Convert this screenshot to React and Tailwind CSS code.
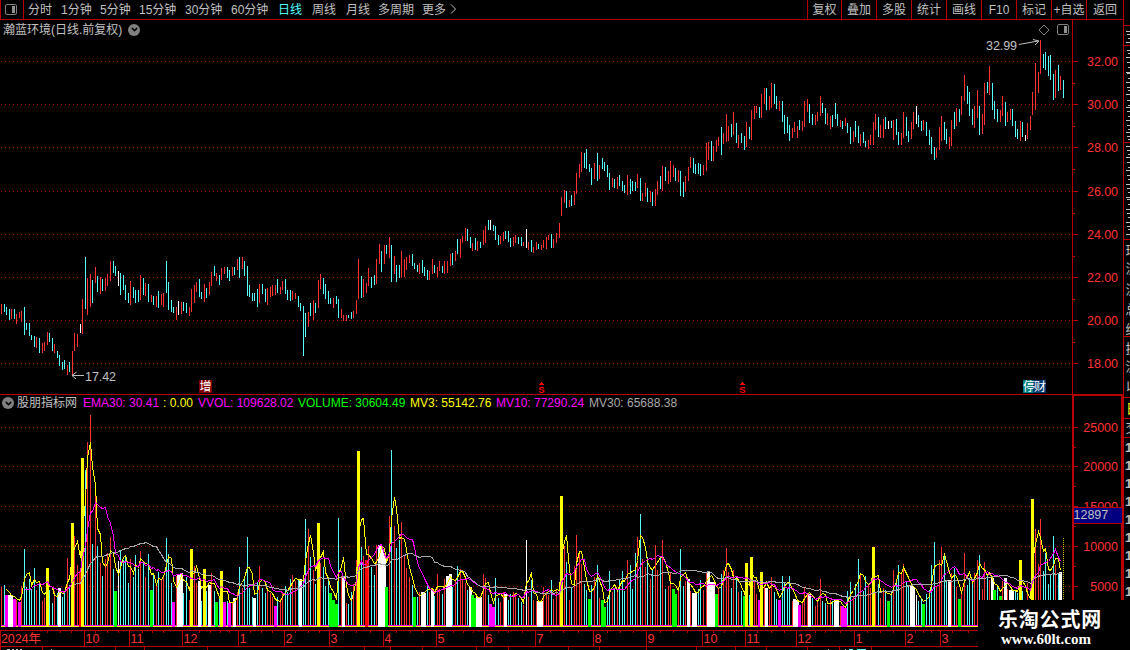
import { ChevronDown } from "lucide-react";

// x,high,low,colour (r up, c down, w flat)
const CANDLES = `
1,304,314r 4,304,312c 6,307,315c 9,309,320c 11,309,319r 14,309,319c 16,314,324r 19,312,318r 21,311,322r 24,307,335c
26,323,330c 29,323,336c 31,335,340c 34,336,347c 36,337,348r 39,338,353c 42,343,353r 44,342,351r 47,332,345r 49,333,342c
52,338,351c 54,344,353r 57,351,358c 59,355,366c 62,362,370c 64,360,369c 67,365,375r 69,362,372c 72,351,375r 74,333,351r
77,334,347r 80,324,333w 82,299,334r 85,257,309c 87,278,315r 90,274,307r 92,280,303c 95,267,283r 97,276,292c 100,277,294r
102,279,291c 105,278,291r 107,274,286r 110,261,281r 113,261,273c 115,266,276c 118,271,286w 120,273,295c 123,275,290c 125,285,300c
128,293,303c 130,281,305r 133,287,298c 135,290,303c 138,290,302c 140,275,300r 143,278,295c 145,283,296r 148,284,302c 151,295,302r
153,296,305c 156,296,307r 158,291,308c 161,294,305r 163,293,307r 166,261,293c 168,282,310c 171,300,312c 173,307,313c 176,307,320r
178,301,315w 181,302,314r 183,302,311c 186,303,313c 189,307,316r 191,289,312r 194,285,303r 196,282,292r 199,279,297c 201,292,299c
204,284,302r 206,288,298c 209,282,295r 211,272,286r 214,266,276c 216,273,281r 219,275,285c 221,268,280r 224,267,274r 227,267,278c
229,270,281c 232,267,276r 234,267,275c 237,259,270r 239,257,278c 242,257,269r 244,261,276c 247,266,296c 249,285,297c 252,293,301c
254,293,301c 257,289,307c 259,284,303r 262,284,294c 265,289,302c 267,288,305r 270,287,297r 272,285,296r 275,285,295r 277,279,293c
280,287,294r 282,281,290r 285,279,294c 287,290,300c 290,290,301c 292,291,300r 295,293,299r 298,296,307c 300,303,311c 303,306,356c
305,313,337c 308,312,327r 310,303,316c 313,300,320r 315,303,313c 318,280,308r 320,274,289r 323,278,294c 325,284,299c 328,291,304c
330,298,304c 333,298,308r 336,296,304c 338,299,318c 341,309,318r 343,315,321r 346,315,321r 348,315,318c 351,312,319c 353,311,318r
356,300,314r 358,259,299r 361,276,298c 363,279,297r 366,283,293r 368,268,286r 371,277,288c 374,275,285c 376,259,284r 379,244,264r
381,251,272c 384,245,264r 386,245,254c 389,237,258r 391,245,282c 394,256,274r 396,265,282c 399,265,278c 401,251,277r 404,259,277r
406,257,270r 409,255,263r 412,254,266c 414,263,269c 417,265,272c 419,263,274r 422,260,273c 424,267,276c 427,270,280c 429,271,280r
432,259,274r 434,265,273c 437,267,277r 439,261,271r 442,266,273c 444,261,274r 447,261,273r 450,254,266r 452,253,265c 455,251,261r
457,239,254c 460,239,258r 462,236,243r 465,228,241r 467,229,241c 470,237,248c 472,243,251r 475,238,250c 477,241,251r 480,242,248c
483,230,245r 485,226,243r 488,220,230c 490,220,230w 493,225,231c 495,226,240c 498,235,245c 500,236,244r 503,232,241r 505,231,239c
508,231,242c 510,238,247c 513,237,246r 515,235,243r 518,237,244c 521,237,246c 523,242,246r 526,229,248w 528,242,250r 531,240,252c
533,247,253r 536,242,250r 538,244,249c 541,245,250r 543,240,248r 546,237,249r 548,235,240r 551,234,248c 553,239,248r 556,233,243r
559,223,238r 561,197,216r 564,190,203r 566,191,208c 569,200,207r 571,195,206c 574,191,205r 576,173,194r 579,164,178r 581,152,172r
584,153,168c 586,149,169c 589,164,172c 591,168,185c 594,163,179r 597,153,181c 599,165,179r 602,158,169c 604,162,171c 607,165,177c
609,173,190c 612,178,187r 614,179,188c 617,177,189r 619,175,186c 622,181,191c 624,185,193c 627,175,195r 630,179,194c 632,181,191c
635,182,191c 637,174,188r 640,178,201c 642,193,201r 645,183,197r 647,188,202c 650,191,202r 652,192,206c 655,189,206r 657,181,195r
660,176,189c 662,166,191r 665,167,181c 668,171,184r 670,161,182r 673,165,177r 675,168,181c 678,170,182r 680,171,196c 683,182,197c
685,176,192r 688,167,181r 690,157,168r 693,158,173c 695,164,174c 698,163,174c 700,164,176c 703,165,175r 706,143,171r 708,142,160r
711,141,161c 713,146,161r 716,140,152r 718,137,146r 721,127,155c 723,133,144r 726,114,142r 728,126,141r 731,124,137c 733,112,135r
736,123,143c 738,135,148r 741,133,143c 744,136,150c 746,122,147r 749,127,139c 751,110,140r 754,106,119r 756,106,113r 759,107,118c
761,94,118r 764,88,104r 766,88,110c 769,96,110r 771,83,108r 774,84,104c 776,96,109c 779,101,111r 782,101,122c 784,115,134c
787,117,133c 789,125,141c 792,128,138r 794,122,132r 797,126,138r 799,120,130c 802,121,131r 804,101,127r 807,99,112r 809,104,123c
812,114,125c 815,115,125r 817,112,121r 820,96,116r 822,103,113c 825,108,124c 827,113,125r 830,116,129r 832,115,127c 835,103,119c
837,114,126c 840,120,127r 842,121,129c 845,118,126r 847,123,133c 850,127,144c 853,131,142r 855,121,137c 858,126,143c 860,134,146r
863,132,143c 865,141,147c 868,140,149r 870,135,145r 873,122,145r 875,114,130r 878,117,137c 880,125,138r 883,119,138r 885,117,129c
888,121,129w 891,121,128c 893,120,140r 896,119,135c 898,132,145c 901,133,145r 903,112,138r 906,117,136c 908,131,142c 911,122,139r
913,112,129r 916,106,124w 918,115,127c 921,121,131c 923,120,130r 926,122,136c 929,130,145c 931,137,154c 934,147,160c 936,148,158r
939,127,150r 941,116,141r 944,122,140c 946,129,144c 949,137,149r 951,120,146r 954,112,129c 956,108,126r 959,109,122c 961,96,115r
964,75,101r 967,86,104c 969,92,116c 972,109,125c 974,106,128r 977,90,118r 979,106,135c 982,114,134r 984,83,125r 987,82,93c
989,66,95r 992,83,110c 994,101,119c 997,109,122c 1000,110,122r 1002,96,116r 1005,102,126c 1007,112,122r 1010,109,120r 1012,109,126c
1015,121,137c 1017,129,139c 1020,121,141r 1022,122,137c 1025,135,141w 1027,123,139r 1030,116,130r 1032,92,115r 1035,63,110r 1038,72,93r
1040,40,74r 1043,54,68c 1045,52,70c 1048,56,76c 1050,55,80c 1053,74,100c 1055,70,98r 1058,65,91c 1060,76,90r 1063,80,98c`;

// x,top and, for the 3px signal bars, a colour letter
const VOLUMES = `
1,587 4,585 6,595M 9,595W 11,595W 14,599M 16,600 19,602M 21,586 24,549 26,587 29,579 31,589 34,568 36,590 39,584 42,601 44,598 47,568Y 49,590
52,603 54,591 57,593 59,588W 62,597 64,592 67,558 69,585 72,523Y 74,536 77,565 80,571R 82,458Y 85,470 87,442 90,415 92,544 95,494 97,546 100,563
102,576 105,559 107,553 110,537 113,569 115,591G 118,561 120,550 123,560 125,555 128,583 130,559 133,577 135,555 138,569 140,551 143,562 145,577 148,554 151,590G
153,575 156,586 158,572 161,580 163,577 166,538 168,554 171,583 173,602M 176,576 178,575W 181,573W 183,593 186,577 189,600 191,549Y 194,566 196,583 199,581W 201,601
204,569Y 206,591 209,585W 211,573 214,591 216,602G 219,599 221,571Y 224,602M 227,601 229,603M 232,602 234,598W 237,592 239,567 242,588 244,577 247,537 249,588 252,597
254,598W 257,582 259,566 262,588 265,593 267,588 270,593 272,597 275,606M 277,597 280,599 282,592 285,586 287,592 290,579 292,575 295,581 298,580 300,579W 303,581
305,519 308,529 310,557 313,570 315,584 318,523Y 320,563 323,567 325,586 328,581 330,593G 333,600G 336,604G 338,518 341,576 343,577W 346,603 348,604 351,592 353,584
356,560 358,451Y 361,547 363,556 366,560R 368,546 371,567 374,575 376,545 379,545W 381,547W 384,553W 386,587G 389,516 391,450 394,526 396,548 399,540 401,522 404,556
406,568 409,577 412,585 414,597G 417,597 419,592 422,592W 424,593W 427,583 429,592 432,589W 434,596 437,574 439,589 442,594 444,579 447,576W 450,574W 452,587 455,579
457,566 460,569 462,579 465,583 467,590 470,587W 472,595G 475,598G 477,597W 480,597W 483,574 485,578 488,595 490,604M 493,607M 495,578 498,598 500,602 503,592 505,594W
508,600 510,594 513,592 515,593 518,598 521,602 523,605 526,540 528,597 531,580 533,600 536,601 538,601W 541,601W 543,587 546,592 548,595 551,580 553,599 556,589
559,582 561,496Y 564,546 566,562 569,600 571,588 574,566 576,535 579,553 581,564 584,584 586,590 589,599G 591,585 594,577 597,565 599,598 602,600G 604,607G 607,597
609,571 612,592 614,589 617,589 619,580 622,571 624,591 627,560 630,565 632,589 635,553 637,537 640,514 642,559 645,567 647,557 650,579 652,570 655,545 657,570
660,557 662,540 665,589 668,586 670,573 673,589G 675,594G 678,587 680,549 683,586 685,581 688,579W 690,591 693,593W 695,593W 698,589 700,580 703,590 706,573 708,571W
711,582W 713,582W 716,594G 718,589 721,574 723,570 726,548 728,572 731,588 733,570 736,576 738,592 741,591 744,596G 746,563Y 749,595 751,557Y 754,580 756,594 759,600M
761,572Y 764,585 766,588W 769,590 771,577 774,592 776,599 779,600M 782,576 784,582 787,589 789,576 792,601 794,599W 797,600W 799,605M 802,601 804,587 807,594 809,594W
812,598 815,606 817,600 820,579 822,601 825,603 827,605 830,600 832,601 835,599W 837,599W 840,606 842,606M 845,608M 847,591 850,582 853,596 855,584 858,559 860,575
863,591 865,576 868,584 870,588 873,547Y 875,593 878,584 880,598 883,588 885,590 888,601G 891,592 893,570 896,582 898,565 901,573 903,564 906,582 908,586 911,585W
913,587W 916,595 918,601 921,599 923,604G 926,594 929,590 931,565 934,542 936,587 939,560 941,547 944,556 946,580 949,580W 951,573 954,568 956,587 959,599G 961,590
964,553 967,585 969,578 972,584 974,573 977,560 979,555 982,589 984,562 987,575 989,580 992,578W 994,590G 997,586 1000,596G 1002,581 1005,578W 1007,589 1010,590W 1012,590W
1015,591 1017,593 1020,560Y 1022,591 1025,605 1027,583 1030,605 1032,499Y 1035,529 1038,564 1040,519 1043,571 1045,553 1048,584 1050,574 1053,536 1055,565 1058,574 1060,572W`;

const COLORS = {
  r: "#ff3232",
  c: "#54fcfc",
  w: "#ffffff",
  M: "#ff00ff",
  W: "#ffffff",
  Y: "#ffff00",
  G: "#00ff00",
  R: "#ff0000",
};

const candles = CANDLES.trim().split(/\s+/).map((item) => {
  const [x, high, low] = item.slice(0, -1).split(",").map(Number);
  return { x, high, low, color: COLORS[item.slice(-1)] };
});

const candleColor = Object.fromEntries(candles.map((c) => [c.x, c.color]));

const volumes = VOLUMES.trim().split(/\s+/).map((item) => {
  const [, x, top, flag] = item.match(/^(\d+),(\d+)([A-Z]?)$/);
  return { x: Number(x), top: Number(top), flag, color: flag ? COLORS[flag] : candleColor[x] };
});

const average = (n) =>
  volumes
    .map((v, i) => {
      if (i < n - 1) return null;
      const sum = volumes.slice(i - n + 1, i + 1).reduce((a, b) => a + b.top, 0);
      return `${v.x + 0.5},${Math.round(sum / n) + 0.5}`;
    })
    .filter(Boolean)
    .join(" ");

const periods = [
  { label: "分时", width: "w-[33px]" },
  { label: "1分钟", width: "w-[39px]" },
  { label: "5分钟", width: "w-[39px]" },
  { label: "15分钟", width: "w-[46px]" },
  { label: "30分钟", width: "w-[46px]" },
  { label: "60分钟", width: "w-[47px]" },
  { label: "日线", width: "w-[34px]", active: true },
  { label: "周线", width: "w-[34px]" },
  { label: "月线", width: "w-[32px]" },
  { label: "多周期", width: "w-[44px]" },
  { label: "更多", width: "w-[28px]" },
];

const tools = ["复权", "叠加", "多股", "统计", "画线", "F10", "标记", "+自选", "返回"];

const indicators = [
  { label: "EMA30: 30.41", style: "w-[80px] text-[#ff00ff]" },
  { label: ": 0.00", style: "w-[35px] text-[#ffff00]" },
  { label: "VVOL: 109628.02", style: "w-[100px] text-[#ff00ff]" },
  { label: "VOLUME: 30604.49", style: "w-[112px] text-[#00ff00]" },
  { label: "MV3: 55142.76", style: "w-[86px] text-[#ffff00]" },
  { label: "MV10: 77290.24", style: "w-[93px] text-[#ff00ff]" },
  { label: "MV30: 65688.38", style: "w-[100px] text-[#a8a8a8]" },
];

const priceTicks = [[61, "32.00"], [104, "30.00"], [147, "28.00"], [191, "26.00"], [234, "24.00"], [277, "22.00"], [320, "20.00"], [363, "18.00"]];
const volumeTicks = [[427, "25000"], [466, "20000"], [506, "15000"], [546, "10000"], [586, "5000"]];

const months = [[84, "10"], [129, "11"], [182, "12"], [238, "1"], [284, "2"], [329, "3"], [383, "4"], [436, "5"], [484, "6"], [535, "7"], [593, "8"], [646, "9"], [702, "10"], [745, "11"], [796, "12"], [854, "1"], [905, "2"], [940, "3"]];
const weekTicks = [47, 60, 71, 95, 107, 118, 142, 152, 163, 199, 210, 220, 229, 250, 261, 272, 295, 308, 319, 343, 356, 370, 396, 410, 422, 453, 463, 473, 498, 508, 522, 550, 563, 578, 607, 620, 633, 660, 673, 687, 713, 724, 734, 757, 771, 784, 815, 825, 840, 867, 880, 893, 915, 923, 931, 952, 968];
const footTicks = [0, 42, 115, 144, 207, 364, 390, 422, 476, 508, 568, 599, 646, 696, 735, 766, 807, 839, 871];

const sideLines = [25, 45, 142, 239, 336, 397, 418, 437];
const sideMarks = [31, 34, 38, 42, 50, 53, 57, 62, 67, 72, 73, 78, 82, 87, 90, 94, 100, 105, 107, 111, 116, 120, 125, 129, 132, 136, 139, 146, 150, 154, 157, 162, 167, 170, 175, 179, 184, 188, 192, 197, 199, 204, 209, 213, 217, 222, 226, 229, 234];
const sideText = [[250, "环"], [268, "流"], [289, "流"], [309, "总"], [329, "终"], [348, "换"], [366, "流"], [386, "以"], [427, "交"]];
const sideRows = [447, 465, 483, 501, 519, 537, 555, 573, 591];

const GridLine = ({ y }) => (
  <line x1="1" x2="1072" y1={y + 0.5} y2={y + 0.5} stroke="#a80000" strokeDasharray="1 3" />
);

const PanelIcon = ({ className }) => (
  <svg className={className} width="12" height="11" viewBox="0 0 12 11">
    <rect x="0.5" y="0.5" width="11" height="10" rx="1.5" fill="none" stroke="#808080" />
    <rect x="7" y="2" width="3" height="7" fill="#909090" />
  </svg>
);

const RoundToggle = () => (
  <span className="flex size-3 shrink-0 items-center justify-center rounded-full bg-[#808080]">
    <ChevronDown className="size-[9px] text-black" strokeWidth={4} />
  </span>
);

const Toolbar = () => (
  <div className="flex h-5 items-center border-b border-l border-[#b80000] leading-[18px] text-[#c0c0c0]">
    <div className="flex h-full w-[23px] items-center border-r border-[#b80000] pb-px pl-1">
      <PanelIcon />
    </div>
    <div className="flex flex-1 pl-1">
      {periods.map((p) => (
        <span key={p.label} className={`${p.width} whitespace-nowrap ${p.active ? "text-[#54fcfc]" : ""}`}>
          {p.label}
        </span>
      ))}
      <svg className="mt-[3px]" width="7" height="10" viewBox="0 0 7 10">
        <path d="M1 0.5 L5.5 5 L1 9.5" fill="none" stroke="#c0c0c0" />
      </svg>
    </div>
    {tools.map((tool) => (
      <span
        key={tool}
        className="flex h-full w-[35px] items-center justify-center whitespace-nowrap border-l border-[#b80000] first-of-type:w-[34px] last:w-[37px]"
      >
        {tool}
      </span>
    ))}
  </div>
);

const PricePanel = () => (
  <div className="flex">
    <div className="w-[1072px]">
      <div className="flex h-5 items-center pb-px pl-[3px] text-[#c0c0c0]">
        <span className="w-[125px] whitespace-nowrap">瀚蓝环境(日线.前复权)</span>
        <RoundToggle />
        <svg className="ml-auto" width="12" height="12" viewBox="0 0 12 12">
          <path d="M6 1 L11 6 L6 11 L1 6 Z" fill="none" stroke="#808080" />
        </svg>
        <PanelIcon className="ml-[7px] mr-[3px]" />
      </div>
      <svg className="block overflow-visible" width="1072" height="354" viewBox="0 40 1072 354" shapeRendering="crispEdges">
        {priceTicks.map(([y]) => <GridLine key={y} y={y} />)}
        {candles.map((c) => (
          <rect key={c.x} x={c.x} y={c.high} width="1" height={c.low - c.high} fill={c.color} />
        ))}
        <g fill="none" stroke="#c0c0c0" shapeRendering="auto">
          <path d="M72 375.5 H84 M72 375.5 L76.5 372 M72 375.5 L76 379" />
          <path d="M1019 44.5 L1038 41 M1033 39.5 L1039 41 L1035 45" />
        </g>
        <g fill="#c0c0c0" fontSize="12.5">
          <text x="85" y="381" textLength="31">17.42</text>
          <text x="986" y="50" textLength="31">32.99</text>
        </g>
        <rect x="199" y="380" width="13" height="13" fill="#800000" />
        <text x="199.5" y="391" fill="#fff" fontSize="12">增</text>
        {[542, 743].map((x) => (
          <g key={x} fill="#ff0000">
            <path d={`M${x - 1} 382h1v1h1v1h1v1h-5v-1h1v-1h1z`} />
            <text x={x - 0.5} y="393" fontSize="9.5" fontWeight="bold" textAnchor="middle">S</text>
          </g>
        ))}
        <rect x="1023" y="380" width="10" height="13" fill="#008080" />
        <rect x="1033" y="380" width="13" height="13" fill="#003870" />
        <text x="1023" y="391" fill="#fff" fontSize="12" textLength="23">停财</text>
      </svg>
    </div>
    <svg className="block" width="51" height="374" viewBox="1072 20 51 374" shapeRendering="crispEdges">
      <rect x="1072" y="20" width="1" height="374" fill="#b80000" />
      {priceTicks.map(([y, label], i) => (
        <g key={y}>
          <rect x="1073" y={y} width="5" height="1" fill="#b80000" />
          {i < 7 && <rect x="1073" y={y + 22} width="2" height="1" fill="#b80000" />}
          <text x="1087" y={y + 5} fontSize="12.5" fill="#ff3232" textLength="31">{label}</text>
        </g>
      ))}
    </svg>
  </div>
);

const VolumePanel = () => (
  <div className="flex border-t border-[#b80000]">
    <div className="w-[1072px]">
      <div className="flex h-4 items-center pl-[2px] leading-4">
        <RoundToggle />
        <span className="ml-[3px] w-[66px] whitespace-nowrap text-[#c0c0c0]">股朋指标网</span>
        {indicators.map((item) => (
          <span key={item.label} className={`${item.style} whitespace-nowrap`}>{item.label}</span>
        ))}
      </div>
      <svg className="block" width="1072" height="219" viewBox="0 411 1072 219" shapeRendering="crispEdges">
        {volumeTicks.map(([y]) => <GridLine key={y} y={y} />)}
        {volumes.filter((v) => !v.flag).map((v) => (
          <rect key={v.x} x={v.x} y={v.top} width="1" height={627 - v.top} fill={v.color} />
        ))}
        <rect x="1" y="625" width="1062" height="1" fill="#ff00ff" />
        <rect x="1" y="626" width="1062" height="1" fill="#ffff00" />
        {volumes.filter((v) => v.flag).map((v) => (
          <rect key={v.x} x={v.x - 1} y={v.top} width="3" height={627 - v.top} fill={v.color} />
        ))}
        <g fill="none">
          <polyline points={average(3)} stroke="#ffff00" />
          <polyline points={average(10)} stroke="#ff00ff" />
          <polyline points={average(30)} stroke="#a8a8a8" />
          <line x1="1063.5" x2="1063.5" y1="538" y2="600" stroke="#c0c000" strokeDasharray="1 1" />
        </g>
      </svg>
    </div>
    <svg className="block" width="51" height="235" viewBox="1072 395 51 235" shapeRendering="crispEdges">
      {volumeTicks.map(([y, label], i) => (
        <g key={y}>
          <rect x="1074" y={y} width="4" height="1" fill="#b80000" />
          {i < 4 && <rect x="1074" y={y + 20} width="2" height="1" fill="#b80000" />}
          <text x="1118" y={y + 5} fontSize="12.5" fill="#ff3232" textAnchor="end">{label}</text>
        </g>
      ))}
      <path d="M1073 630 V395 H1122 V630" fill="none" stroke="#b80000" strokeWidth="2" />
      <rect x="1074" y="507" width="48" height="17" fill="#b80000" />
      <rect x="1074" y="508" width="48" height="15" fill="#000080" />
      <text x="1073.5" y="519" fontSize="12.5" fill="#c0c0c0">12897</text>
    </svg>
  </div>
);

const TimeAxis = () => (
  <svg className="block" width="1123" height="20" viewBox="0 630 1123 20" shapeRendering="crispEdges">
    <g fill="#b80000">
      <rect x="0" y="630" width="1123" height="1" />
      <rect x="0" y="646" width="1123" height="1" />
      <rect x="0" y="630" width="1" height="17" />
      {weekTicks.map((x) => <rect key={x} x={x} y="631" width="1" height="2" />)}
      {footTicks.map((x) => <rect key={x} x={x} y="647" width="1" height="3" />)}
      {months.map(([x]) => <rect key={x} x={x} y="630" width="1" height="17" />)}
    </g>
    <g fill="#ff3232" fontSize="12.5">
      <text x="1" y="643" textLength="40">2024年</text>
      {months.map(([x, label]) => <text key={x} x={x + 1.5} y="643">{label}</text>)}
    </g>
    <g fill="#c0c0c0">
      <path d="M7 649h3v1h-3z M12 649h2v1h-2z M16 649h2v1h-2z M20 649h2v1h-2z M51 649h1v1h-1z M828 649h1v1h-1z M845 649h1v1h-1z" />
      <path d="M849 649h4v1h-4z M857 649h9v1h-9z" fill="#54fcfc" />
    </g>
  </svg>
);

const SidePanel = () => (
  <svg className="block" width="7" height="650" viewBox="1123 0 7 650" shapeRendering="crispEdges">
    <rect x="1123" y="0" width="1" height="650" fill="#b80000" />
    {sideLines.map((y) => <rect key={y} x="1124" y={y} width="6" height="1" fill="#b80000" />)}
    {sideMarks.map((y, i) => (
      <rect key={y} x={1126 + (i % 3)} y={y} width={4 - (i % 3)} height="1" fill="#c0c0c0" />
    ))}
    <g fill="#c0c0c0" fontSize="13">
      {sideText.map(([y, char]) => <text key={y} x="1125.5" y={y + 5}>{char}</text>)}
      {sideRows.map((y) => <text key={y} x="1125" y={y + 5} fontWeight="bold">1</text>)}
    </g>
    <text x="1126" y="413" fontSize="13" fill="#ffff00">日</text>
  </svg>
);

export default function App() {
  return (
    <div className="relative flex h-[650px] w-[1130px] overflow-hidden bg-black font-['Liberation_Sans','Noto_Sans_CJK_SC',sans-serif] text-[12px]">
      <div className="w-[1123px]">
        <Toolbar />
        <PricePanel />
        <VolumePanel />
        <TimeAxis />
      </div>
      <SidePanel />
      <div className="absolute right-0 bottom-0 flex h-[50px] w-[152px] flex-col items-center bg-black pr-2 text-white">
        <span className="mt-[7px] whitespace-nowrap font-['Noto_Sans_CJK_SC',sans-serif] text-[20px] leading-[24px] font-bold tracking-[0.8px]">乐淘公式网</span>
        <span className="mr-2 font-['Liberation_Serif',serif] text-[15px] leading-[16px] font-bold">www.60lt.com</span>
      </div>
    </div>
  );
}
